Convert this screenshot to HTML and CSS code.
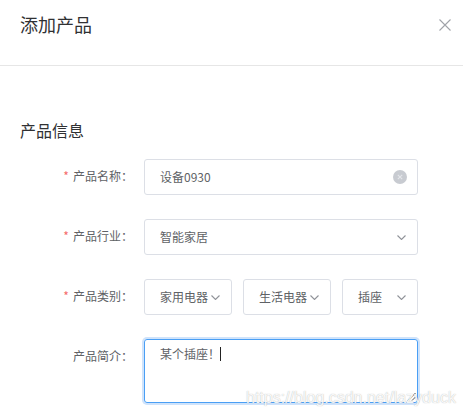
FILE: index.html
```html
<!DOCTYPE html>
<html lang="zh">
<head>
<meta charset="utf-8">
<title>添加产品</title>
<link rel="stylesheet" href="styles.css">
</head>
<body>
<div class="dialog">
  <div class="header">
    <span class="title">添加产品</span>
    <svg class="close" width="12" height="12" viewBox="0 0 12 12"><path d="M0.5 0.5L11.5 11.5M11.5 0.5L0.5 11.5" stroke="#a0a3a9" stroke-width="1.1" fill="none"/></svg>
  </div>
  <div class="body">
    <div class="section">产品信息</div>
    <div class="row">
      <label class="label"><span class="req">*</span>产品名称<span class="colon">：</span></label>
      <div class="field input">
        <span class="val">设备0930</span>
        <span class="clear"><svg width="14" height="14" viewBox="0 0 14 14"><circle cx="7" cy="7" r="7" fill="#c8cbd1"/><path d="M4.8 4.8L9.2 9.2M9.2 4.8L4.8 9.2" stroke="#e4e6ea" stroke-width="1.1"/></svg></span>
      </div>
    </div>
    <div class="row">
      <label class="label"><span class="req">*</span>产品行业<span class="colon">：</span></label>
      <div class="field input">
        <span class="val">智能家居</span>
        <svg class="chev" width="9" height="5" viewBox="0 0 9 5"><path d="M0.5 0.5L4.5 4.5L8.5 0.5" stroke="#909399" stroke-width="1.1" fill="none"/></svg>
      </div>
    </div>
    <div class="row">
      <label class="label"><span class="req">*</span>产品类别<span class="colon">：</span></label>
      <div class="cats">
        <div class="field sel w1"><span class="val">家用电器</span><svg class="chev" width="9" height="5" viewBox="0 0 9 5"><path d="M0.5 0.5L4.5 4.5L8.5 0.5" stroke="#909399" stroke-width="1.1" fill="none"/></svg></div>
        <div class="field sel w1"><span class="val">生活电器</span><svg class="chev" width="9" height="5" viewBox="0 0 9 5"><path d="M0.5 0.5L4.5 4.5L8.5 0.5" stroke="#909399" stroke-width="1.1" fill="none"/></svg></div>
        <div class="field sel w2"><span class="val">插座</span><svg class="chev" width="9" height="5" viewBox="0 0 9 5"><path d="M0.5 0.5L4.5 4.5L8.5 0.5" stroke="#909399" stroke-width="1.1" fill="none"/></svg></div>
      </div>
    </div>
    <div class="row">
      <label class="label">产品简介<span class="colon">：</span></label>
      <div class="area">
        <span class="val">某个插座<span class="colon">！</span></span><span class="caret"></span>
        <svg class="grip" width="9" height="9" viewBox="0 0 9 9"><path d="M8.5 1L1 8.5M8.5 5L5 8.5" stroke="#555" stroke-width="1"/></svg>
      </div>
    </div>
  </div>
</div>
<div class="watermark">https://blog.csdn.net/lazyduck</div>
</body>
</html>
```
FILE: styles.css
```css
html, body {
  margin: 0;
  padding: 0;
  background: #fff;
}
body {
  font-family: "Noto Sans CJK SC", "Noto Sans", sans-serif;
  color: #606266;
  width: 463px;
  height: 418px;
  overflow: hidden;
  position: relative;
}
.header {
  height: 66px;
  box-sizing: border-box;
  border-bottom: 1px solid #e6e6e6;
  display: flex;
  justify-content: space-between;
  align-items: flex-start;
  padding: 12px 12px 0 20px;
}
.title {
  font-size: 18px;
  line-height: 24px;
  color: #303133;
}
.close {
  margin-top: 7px;
}
.body {
  padding: 53px 45px 0 0;
}
.section {
  font-size: 16px;
  line-height: 22px;
  color: #303133;
  padding-left: 20px;
  margin-bottom: 18px;
}
.row {
  display: flex;
  align-items: flex-start;
  margin-bottom: 24px;
}
.label {
  width: 144px;
  box-sizing: border-box;
  padding-right: 11px;
  text-align: right;
  font-size: 12px;
  line-height: 34px;
  color: #606266;
}
.colon {
  font-family: "Noto Sans CJK TC", "Noto Sans CJK SC", sans-serif;
}
.req {
  color: #f56c6c;
  margin-right: 4px;
}
.field {
  box-sizing: border-box;
  height: 36px;
  border: 1px solid #dcdfe6;
  border-radius: 3px;
  display: flex;
  align-items: center;
  justify-content: space-between;
  padding: 0 11px 0 15px;
  font-size: 12px;
  color: #606266;
}
.input {
  width: 274px;
}
.val {
  line-height: 18px;
}
.clear {
  display: flex;
  margin-right: -1px;
}
.chev {
  display: block;
}
.cats {
  display: flex;
  gap: 11px;
}
.w1 {
  width: 88px;
  padding-right: 11px;
}
.w2 {
  width: 76px;
}
.area {
  position: relative;
  box-sizing: border-box;
  width: 274px;
  height: 64px;
  border: 1px solid #4a9ff5;
  border-radius: 3px;
  box-shadow: 0 0 0 2px #cfe3fb;
  padding: 5px 15px;
  font-size: 12px;
  line-height: 18px;
  color: #606266;
  display: flex;
  align-items: flex-start;
}
.caret {
  display: inline-block;
  width: 1px;
  height: 14px;
  background: #222;
  margin: 2px 0 0 0;
}
.grip {
  position: absolute;
  right: 1px;
  bottom: 1px;
}
.watermark {
  position: absolute;
  left: 246px;
  top: 388px;
  font-family: "Liberation Sans", Arial, sans-serif;
  font-size: 16px;
  line-height: 20px;
  color: rgba(255, 255, 255, 0.92);
  text-shadow: 0 0 1px rgba(120, 120, 120, 0.6);
}
```
